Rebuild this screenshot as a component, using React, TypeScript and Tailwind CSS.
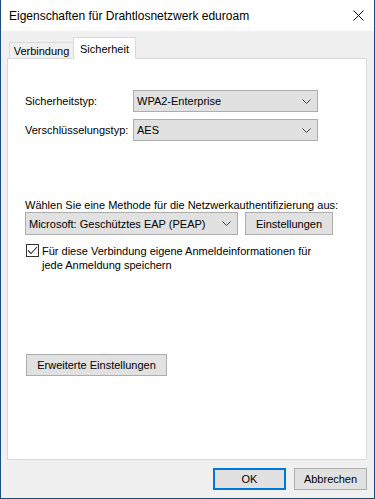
import React from "react";

const Chevron = () => (
  <svg width="9" height="5" viewBox="0 0 9 5" className="shrink-0">
    <path d="M0.5 0.5 L4.5 4.5 L8.5 0.5" fill="none" stroke="#404040" strokeWidth="1" />
  </svg>
);

function Select({ value, className }: { value: string; className: string }) {
  return (
    <div
      className={`flex items-center justify-between border border-[#adadad] bg-[#e1e1e1] pl-[3px] pr-[6px] text-black ${className}`}
    >
      <span>{value}</span>
      <Chevron />
    </div>
  );
}

function Button({ label, className }: { label: string; className: string }) {
  return (
    <div
      className={`flex items-center justify-center border border-[#adadad] bg-[#e1e1e1] text-black ${className}`}
    >
      {label}
    </div>
  );
}

export default function App() {
  return (
    <div
      className="flex h-[499px] w-[375px] flex-col border-x border-b border-[#1b4f7f] text-[11px] leading-[14px] text-black"
      style={{ fontFamily: '"Liberation Sans", Arial, sans-serif' }}
    >
      {/* Title bar */}
      <div className="flex h-[31px] items-center justify-between bg-white pl-[8px] pr-[10px]">
        <span className="text-[12px] text-black">Eigenschaften für Drahtlosnetzwerk eduroam</span>
        <svg width="11" height="11" viewBox="0 0 11 11">
          <path d="M0.5 0.5 L10.5 10.5 M10.5 0.5 L0.5 10.5" stroke="#111" strokeWidth="1" />
        </svg>
      </div>

      {/* Body */}
      <div className="flex flex-1 flex-col bg-[#f0f0f0] pl-[6px] pr-[7px] pt-[6px]">
        {/* Tabs */}
        <div className="flex items-end pl-[2px]">
          <div className="-mb-px flex h-[17px] w-[64px] items-center justify-center border border-r-0 border-[#d9d9d9] bg-[#f0f0f0] pt-[1px]">
            Verbindung
          </div>
          <div className="relative z-10 -mb-px flex h-[22px] w-[63px] items-start justify-center border border-b-0 border-[#d9d9d9] bg-white pt-[4px]">
            Sicherheit
          </div>
        </div>

        {/* Panel */}
        <div className="flex flex-1 flex-col border border-[#d9d9d9] bg-white pl-[17px]">
          <div className="mt-[31px] flex items-center">
            <span className="w-[108px]">Sicherheitstyp:</span>
            <Select value="WPA2-Enterprise" className="h-[22px] w-[185px]" />
          </div>
          <div className="mt-[7px] flex items-center">
            <span className="w-[108px]">Verschlüsselungstyp:</span>
            <Select value="AES" className="h-[22px] w-[185px]" />
          </div>

          <div className="mt-[57px]">Wählen Sie eine Methode für die Netzwerkauthentifizierung aus:</div>
          <div className="flex items-center gap-[7px]">
            <Select value="Microsoft: Geschütztes EAP (PEAP)" className="h-[23px] w-[213px]" />
            <Button label="Einstellungen" className="h-[23px] w-[88px]" />
          </div>

          <div className="mt-[9px] flex items-start gap-[3px] pl-[1px]">
            <div className="flex h-[13px] w-[13px] shrink-0 items-center justify-center border border-[#333] bg-white">
              <svg width="11" height="9" viewBox="0 0 11 9">
                <path d="M1 4.5 L4 7.5 L10 1" fill="none" stroke="#333" strokeWidth="1.1" />
              </svg>
            </div>
            <div className="leading-[14px]">
              Für diese Verbindung eigene Anmeldeinformationen für
              <br />
              jede Anmeldung speichern
            </div>
          </div>

          <Button label="Erweiterte Einstellungen" className="mt-[82px] h-[22px] w-[141px] ml-[1px]" />
        </div>

        {/* Footer buttons */}
        <div className="flex h-[38px] items-center justify-end gap-[8px]">
          <div className="flex h-[22px] w-[73px] items-center justify-center border-2 border-[#0078d7] bg-[#e1e1e1]">
            OK
          </div>
          <Button label="Abbrechen" className="h-[22px] w-[73px]" />
        </div>
      </div>
    </div>
  );
}
